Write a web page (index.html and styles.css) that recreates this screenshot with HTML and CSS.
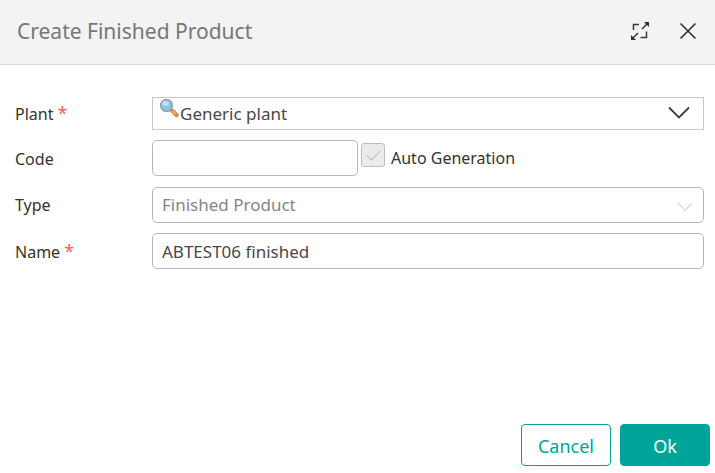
FILE: index.html
```html
<!DOCTYPE html>
<html lang="en">
<head>
<meta charset="utf-8">
<title>Create Finished Product</title>
<link rel="stylesheet" href="styles.css">
</head>
<body>
<form class="dialog">
  <header class="dialog-header">
    <h1 class="dialog-title">Create Finished Product</h1>
    <div class="window-actions">
      <button class="icon-button" type="button" aria-label="Expand">
        <svg width="20" height="20" viewBox="0 0 20 20" fill="none" stroke="#383838" stroke-width="1.5">
          <path d="M3.500 9V3.500H9M16.500 10.500V16.500H10.500M12 8L17 3M8 12L3 17"/>
          <path fill="#303030" stroke="none" d="M14 1H19V6zM1 14V19H6z"/>
        </svg>
      </button>
      <button class="icon-button" type="button" aria-label="Close">
        <svg width="20" height="20" viewBox="0 0 20 20" fill="none" stroke="#303030" stroke-width="1.6">
          <path d="M2.500 2.500L17.500 17.500M17.500 2.500L2.500 17.500"/>
        </svg>
      </button>
    </div>
  </header>
  <main class="fields">
    <label class="label" for="plant">Plant <span class="required">*</span></label>
    <div class="select-box">
      <select class="control plant" id="plant" required><option>Generic plant</option></select>
      <svg class="search-icon" width="20" height="20" viewBox="0 0 20 20">
        <path d="M11.500 11.500L13.500 13.500" stroke="#8b8b8b" stroke-width="2.500"/>
        <path d="M13.500 13L17.500 17" stroke="#b98a62" stroke-width="4.400" stroke-linecap="round"/>
        <path d="M13.200 12.700L17 16.500" stroke="#f5a546" stroke-width="3"/>
        <circle cx="7.500" cy="7.500" r="5.900" fill="#8fc4de" stroke="#91a0a9" stroke-width="1.500"/>
        <ellipse cx="6.500" cy="5.500" rx="3.500" ry="2.500" fill="#bfe0ee"/>
      </svg>
      <svg class="arrow" width="22" height="14" viewBox="0 0 22 14" fill="none" stroke="#3c3c3c" stroke-width="1.800"><path d="M1 1.500L11 11.500L21 1.500"/></svg>
    </div>

    <label class="label" for="code">Code</label>
    <div class="code-row">
      <input class="control code" id="code" type="text">
      <input class="check" id="auto" type="checkbox" checked disabled>
      <label class="check-label" for="auto">Auto Generation</label>
    </div>

    <label class="label" for="type">Type</label>
    <div class="select-box">
      <select class="control type" id="type" disabled><option>Finished Product</option></select>
      <svg class="arrow arrow-small" width="16" height="10" viewBox="0 0 16 10" fill="none" stroke="#dcdcdc" stroke-width="1.500"><path d="M1 1L8 8.500L15 1"/></svg>
    </div>

    <label class="label" for="name">Name <span class="required">*</span></label>
    <input class="control" id="name" type="text" value="ABTEST06 finished" required>
  </main>
  <footer class="dialog-footer">
    <button class="button" type="button">Cancel</button>
    <button class="button button-primary" type="submit">Ok</button>
  </footer>
</form>
</body>
</html>
```
FILE: styles.css
```css
* {
  box-sizing: border-box;
}

body {
  margin: 0;
  background: #fff;
  color: #333;
  font: 16px/24px "Noto Sans", "Open Sans", sans-serif;
}

button,
input,
select {
  margin: 0;
  font: inherit;
}

.dialog {
  display: flex;
  flex-direction: column;
  min-height: 100vh;
}

.dialog-header {
  display: flex;
  align-items: center;
  justify-content: space-between;
  padding: 15px 17px 17px;
  border-bottom: 1px solid #dcdcdc;
  background: #f3f3f3;
}

.dialog-title {
  margin: 0;
  color: #777;
  font-size: 21px;
  font-weight: 400;
  line-height: 32px;
}

.window-actions {
  display: flex;
  gap: 28px;
}

.icon-button {
  display: block;
  padding: 0;
  border: 0;
  background: none;
}

.icon-button svg {
  display: block;
}

.fields {
  display: grid;
  grid-template-columns: 127px 1fr;
  gap: 10px;
  align-items: center;
  padding: 32px 11px 32px 15px;
}

.required {
  color: #ff5c5c;
  font-size: 18px;
}

.control {
  display: block;
  width: 100%;
  height: 36px;
  padding: 0 9px;
  border: 1px solid #b8b8b8;
  border-radius: 5px;
  background: #fff;
  color: #484848;
  font-size: 17px;
  appearance: none;
}

.select-box {
  position: relative;
}

.plant {
  height: 33px;
  padding: 0 40px 0 27px;
  border-color: #c8c8c8;
  border-radius: 0;
}

.type {
  color: #858585;
  opacity: 1;
}

.search-icon {
  position: absolute;
  top: 1px;
  left: 7px;
}

.arrow {
  position: absolute;
  top: 9px;
  right: 14px;
  pointer-events: none;
}

.arrow-small {
  top: 15px;
  right: 11px;
}

.code-row {
  display: flex;
  align-items: flex-start;
  min-height: 37px;
}

.code {
  width: 206px;
}

.check {
  display: grid;
  place-items: center;
  width: 24px;
  height: 24px;
  margin: 3px 6px 0 3px;
  border: 1px solid #bdbdbd;
  border-radius: 3px;
  background: #ebebeb;
  appearance: none;
}

.check:checked::before {
  content: "";
  width: 12px;
  height: 6px;
  margin-bottom: 4px;
  border: solid #bdbdbd;
  border-width: 0 0 1px 1px;
  transform: rotate(-45deg);
}

.check-label {
  line-height: 36px;
}

.dialog-footer {
  display: flex;
  justify-content: flex-end;
  gap: 9px;
  margin-top: auto;
  padding: 0 5px 7px;
}

.button {
  width: 90px;
  height: 42px;
  padding: 2px 0 0;
  border: 1px solid #00a499;
  border-radius: 4px;
  background: #fff;
  color: #00a499;
  font-size: 18px;
}

.button-primary {
  background: #00a499;
  color: #fff;
}
```
